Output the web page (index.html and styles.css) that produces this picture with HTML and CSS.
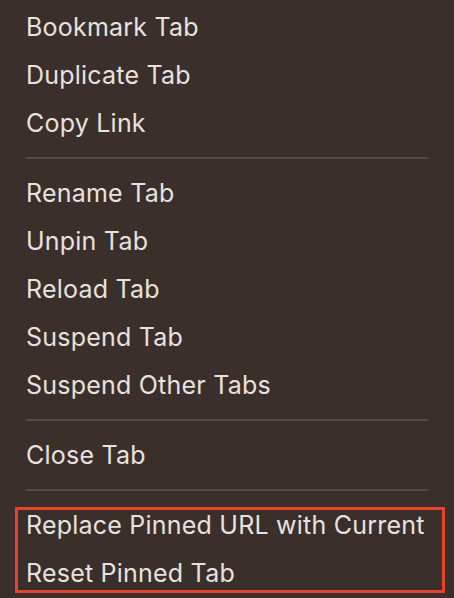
FILE: index.html
```html
<!DOCTYPE html>
<html>
<head>
<meta charset="utf-8">
<link rel="stylesheet" href="styles.css">
</head>
<body>
<div class="menu">
  <div class="item">Bookmark Tab</div>
  <div class="item">Duplicate Tab</div>
  <div class="item">Copy Link</div>
  <div class="sep"></div>
  <div class="item">Rename Tab</div>
  <div class="item">Unpin Tab</div>
  <div class="item">Reload Tab</div>
  <div class="item">Suspend Tab</div>
  <div class="item">Suspend Other Tabs</div>
  <div class="sep"></div>
  <div class="item">Close Tab</div>
  <div class="sep"></div>
  <div class="group">
    <div class="item">Replace Pinned URL with Current</div>
    <div class="item">Reset Pinned Tab</div>
  </div>
</div>
</body>
</html>
```
FILE: styles.css
```css
html, body {
  margin: 0;
  padding: 0;
  height: 100%;
}
body {
  background: #3a2f2b;
  font-family: Inter, "Noto Sans", sans-serif;
  color: #e7e2df;
  overflow: hidden;
}
.menu {
  display: flex;
  flex-direction: column;
  padding: 3px 0 0 0;
}
.item {
  height: 48px;
  line-height: 48px;
  padding-left: 26px;
  font-size: 25px;
  letter-spacing: 0.22px;
  white-space: nowrap;
}
.sep {
  height: 22px;
  display: flex;
  align-items: center;
  padding: 0 26px;
}
.sep::before {
  content: "";
  flex: 1;
  height: 2px;
  background: #564a46;
}
.group {
  position: relative;
}
.group::after {
  content: "";
  position: absolute;
  left: 15px;
  right: 9px;
  top: 6px;
  bottom: 4px;
  border: 3px solid #e8442b;
  pointer-events: none;
}
```
